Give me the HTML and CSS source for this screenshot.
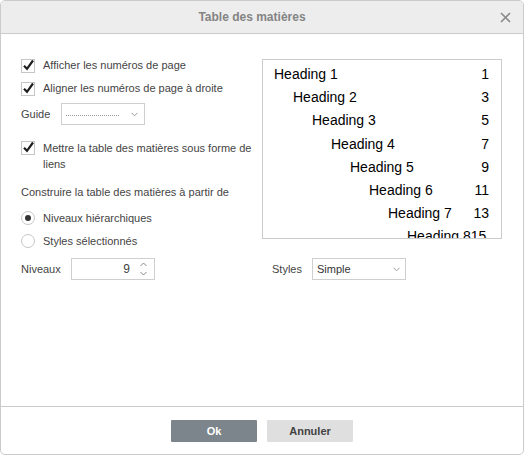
FILE: index.html
```html
<!DOCTYPE html>
<html lang="fr">
<head>
<meta charset="utf-8">
<title>Table des matières</title>
<link rel="stylesheet" href="styles.css">
</head>
<body>
<div class="dialog">
  <div class="header">
    <span class="title">Table des matières</span>
    <span class="close">
      <svg width="11" height="11" viewBox="0 0 11 11"><path d="M1 1 L10 10 M10 1 L1 10" stroke="#8a8a8a" stroke-width="1.6" fill="none"/></svg>
    </span>
  </div>
  <div class="body">
    <div class="top">
      <div class="left">
        <div class="row r1">
          <span class="cb"><svg width="14" height="14" viewBox="0 0 14 14"><rect x="0.5" y="0.5" width="13" height="13" fill="#fff" stroke="#c6c6c6"/><path d="M3 6.8 L6 9.8 L12 1.5" stroke="#1f1f1f" stroke-width="2.2" fill="none"/></svg></span>
          <span class="lbl">Afficher les numéros de page</span>
        </div>
        <div class="row r2">
          <span class="cb"><svg width="14" height="14" viewBox="0 0 14 14"><rect x="0.5" y="0.5" width="13" height="13" fill="#fff" stroke="#c6c6c6"/><path d="M3 6.8 L6 9.8 L12 1.5" stroke="#1f1f1f" stroke-width="2.2" fill="none"/></svg></span>
          <span class="lbl">Aligner les numéros de page à droite</span>
        </div>
        <div class="row guide">
          <span class="field-label guide-label">Guide</span>
          <span class="select guide-select">
            <span class="dots"></span>
            <svg class="chev" width="7" height="5" viewBox="0 0 7 5"><path d="M0.5 0.8 L3.5 3.8 L6.5 0.8" stroke="#9a9a9a" stroke-width="1" fill="none"/></svg>
          </span>
        </div>
        <div class="row r3">
          <span class="cb"><svg width="14" height="14" viewBox="0 0 14 14"><rect x="0.5" y="0.5" width="13" height="13" fill="#fff" stroke="#c6c6c6"/><path d="M3 6.8 L6 9.8 L12 1.5" stroke="#1f1f1f" stroke-width="2.2" fill="none"/></svg></span>
          <span class="lbl">Mettre la table des matières sous forme de liens</span>
        </div>
        <div class="row build">Construire la table des matières à partir de</div>
        <div class="row rad1">
          <span class="radio checked"></span>
          <span class="lbl">Niveaux hiérarchiques</span>
        </div>
        <div class="row rad2">
          <span class="radio"></span>
          <span class="lbl">Styles sélectionnés</span>
        </div>
      </div>
      <div class="preview">
        <div class="toc l1"><span>Heading 1</span><span>1</span></div>
        <div class="toc l2"><span>Heading 2</span><span>3</span></div>
        <div class="toc l3"><span>Heading 3</span><span>5</span></div>
        <div class="toc l4"><span>Heading 4</span><span>7</span></div>
        <div class="toc l5"><span>Heading 5</span><span>9</span></div>
        <div class="toc l6"><span>Heading 6</span><span>11</span></div>
        <div class="toc l7"><span>Heading 7</span><span>13</span></div>
        <div class="toc l8"><span>Heading 8</span><span>15</span></div>
      </div>
    </div>
    <div class="bottom">
      <div class="levels">
        <span class="field-label levels-label">Niveaux</span>
        <span class="spinner">
          <span class="value">9</span>
          <span class="arrows">
            <svg width="7" height="5" viewBox="0 0 7 5"><path d="M0.5 4 L3.5 1 L6.5 4" stroke="#8a8a8a" stroke-width="1" fill="none"/></svg>
            <svg width="7" height="5" viewBox="0 0 7 5"><path d="M0.5 1 L3.5 4 L6.5 1" stroke="#8a8a8a" stroke-width="1" fill="none"/></svg>
          </span>
        </span>
      </div>
      <div class="styles">
        <span class="field-label styles-label">Styles</span>
        <span class="select styles-select">
          <span class="sel-text">Simple</span>
          <svg class="chev" width="7" height="5" viewBox="0 0 7 5"><path d="M0.5 0.8 L3.5 3.8 L6.5 0.8" stroke="#9a9a9a" stroke-width="1" fill="none"/></svg>
        </span>
      </div>
    </div>
  </div>
  <div class="footer">
    <button class="btn ok">Ok</button>
    <button class="btn cancel">Annuler</button>
  </div>
</div>
</body>
</html>
```
FILE: styles.css
```css
* { box-sizing: border-box; }
html, body {
  margin: 0;
  padding: 0;
  background: #ffffff;
}
body {
  font-family: "Liberation Sans", Arial, sans-serif;
  font-size: 11px;
  color: #444444;
}
.dialog {
  width: 524px;
  height: 455px;
  border: 1px solid #cbcbcb;
  border-radius: 5px;
  display: flex;
  flex-direction: column;
  overflow: hidden;
  background: #fff;
}
.header {
  height: 33px;
  flex: none;
  background: #ededed;
  border-bottom: 1px solid #cbcbcb;
  display: flex;
  align-items: center;
  padding-left: 8px;
}
.title {
  flex: 1;
  text-align: center;
  font-size: 12px;
  font-weight: bold;
  color: #848484;
}
.close {
  width: 20px;
  height: 20px;
  margin-right: 8px;
  display: flex;
  align-items: center;
  justify-content: center;
}
.body {
  flex: 1;
  padding: 23px 0 0 20px;
}
.top {
  display: grid;
  grid-template-columns: 241px 240px;
  align-items: start;
}
.left {
  display: flex;
  flex-direction: column;
  padding-right: 4px;
}
.row {
  display: flex;
  align-items: center;
  line-height: 16px;
  min-height: 16px;
}
.r2 { margin-top: 7px; }
.guide { margin-top: 7px; height: 22px; }
.r3 { margin-top: 15px; align-items: flex-start; }
.build { margin-top: 12px; }
.rad1 { margin-top: 10px; }
.rad2 { margin-top: 7px; }
.cb {
  width: 14px;
  height: 14px;
  flex: none;
  margin-right: 8px;
  margin-top: 2px;
  display: block;
}
.cb svg { display: block; overflow: visible; }
.r3 .cb { margin-top: 1px; }
.radio {
  width: 14px;
  height: 14px;
  flex: none;
  border: 1px solid #c6c6c6;
  border-radius: 50%;
  margin-right: 8px;
  display: flex;
  align-items: center;
  justify-content: center;
  background: #fff;
}
.radio.checked::after {
  content: "";
  width: 6px;
  height: 6px;
  border-radius: 50%;
  background: #333;
}
.field-label { flex: none; }
.guide-label { width: 40px; }
.select {
  height: 22px;
  border: 1px solid #cfcfcf;
  display: flex;
  align-items: center;
  background: #fff;
}
.guide-select {
  width: 84px;
  padding: 0 6px 0 4px;
}
.dots {
  flex: 1;
  height: 0;
  border-top: 1px dotted #9a9a9a;
  margin-top: 2px;
  margin-right: 12px;
}
.chev { display: block; flex: none; }
.preview {
  margin-top: 2px;
  width: 240px;
  height: 180px;
  border: 1px solid #cbcbcb;
  overflow: hidden;
  padding: 3px 12px 0 11px;
  color: #000;
  font-size: 14px;
}
.toc {
  display: flex;
  justify-content: space-between;
  white-space: nowrap;
  height: 23.2px;
  line-height: 23.2px;
}
.l2 { padding-left: 19px; }
.l3 { padding-left: 38px; }
.l4 { padding-left: 57px; }
.l5 { padding-left: 76px; }
.l6 { padding-left: 95px; }
.l7 { padding-left: 114px; }
.l8 { padding-left: 133px; justify-content: flex-start; }
.bottom {
  margin-top: 9px;
  display: grid;
  grid-template-columns: 241px 240px;
}
.levels, .styles {
  display: flex;
  align-items: center;
  height: 22px;
}
.levels-label { width: 50px; }
.spinner {
  width: 84px;
  height: 22px;
  border: 1px solid #cfcfcf;
  display: flex;
  align-items: center;
}
.value {
  flex: 1;
  text-align: right;
  padding-right: 6px;
  font-size: 12px;
  color: #444;
}
.arrows {
  width: 18px;
  display: flex;
  flex-direction: column;
  align-items: center;
  gap: 4px;
  padding-right: 3px;
}
.arrows svg { display: block; }
.styles { padding-left: 10px; }
.styles-label { width: 40px; }
.styles-select {
  width: 94px;
  padding: 0 5px 0 4px;
  justify-content: space-between;
}
.sel-text { color: #333; }
.footer {
  flex: none;
  height: 48px;
  border-top: 1px solid #cbcbcb;
  display: flex;
  justify-content: center;
  align-items: flex-start;
  padding-top: 13px;
  gap: 10px;
}
.btn {
  width: 86px;
  height: 22px;
  border: none;
  border-radius: 1px;
  font-family: "Liberation Sans", Arial, sans-serif;
  font-size: 11px;
  font-weight: bold;
  padding: 0;
}
.ok { background: #7d858c; color: #fff; }
.cancel { background: #dfdfdf; color: #444; }
```
